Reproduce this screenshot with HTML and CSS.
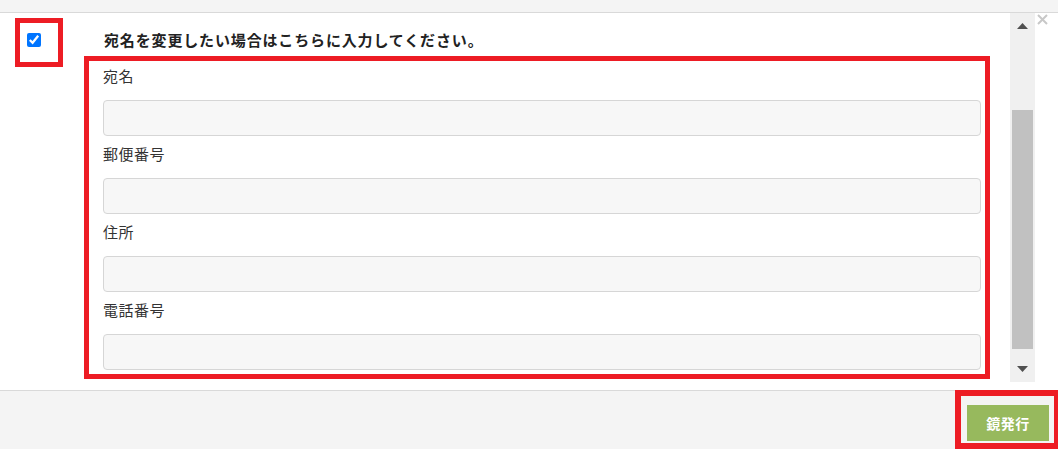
FILE: index.html
```html
<!DOCTYPE html>
<html lang="ja">
<head>
<meta charset="utf-8">
<link rel="stylesheet" href="styles.css">
</head>
<body>
<div class="topbar"></div>
<div class="modal-body">
  <div class="check-col">
    <div class="check-box"><input type="checkbox" class="check" checked></div>
  </div>
  <div class="main">
    <div class="heading">宛名を変更したい場合はこちらに入力してください。</div>
    <div class="fields">
      <div class="group"><div class="label">宛名</div><div class="input"></div></div>
      <div class="group"><div class="label">郵便番号</div><div class="input"></div></div>
      <div class="group"><div class="label">住所</div><div class="input"></div></div>
      <div class="group"><div class="label">電話番号</div><div class="input"></div></div>
    </div>
  </div>
  <div class="scrollbar">
    <div class="sb-btn"><svg width="11" height="6" viewBox="0 0 11 6"><polygon points="5.5,0 11,6 0,6" fill="#505050"/></svg></div>
    <div class="sb-thumb"></div>
    <div class="sb-btn sb-down"><svg width="11" height="6" viewBox="0 0 11 6"><polygon points="0,0 11,0 5.5,6" fill="#505050"/></svg></div>
  </div>
  <div class="close"><svg width="11" height="11" viewBox="0 0 11 11"><path d="M1 1L10 10M10 1L1 10" stroke="#c8c8c8" stroke-width="2"/></svg></div>
</div>
<div class="footer">
  <div class="btn-box"><div class="btn">鏡発行</div></div>
</div>
</body>
</html>
```
FILE: styles.css
```css
* { box-sizing: border-box; }
html, body { margin: 0; padding: 0; }
body {
  width: 1058px;
  height: 449px;
  overflow: hidden;
  background: #fff;
  font-family: "Noto Sans CJK JP", "Noto Sans", sans-serif;
  color: #333;
}
.topbar {
  height: 13px;
  background: #f4f4f4;
  border-bottom: 1px solid #d9d9d9;
}
.modal-body {
  display: flex;
  height: 377px;
}
.check-col {
  width: 84px;
  padding: 5px 0 0 15px;
}
.check-box {
  width: 48px;
  height: 49px;
  border: 5px solid #ed1c24;
  padding: 10px 0 0 7px;
}
.check {
  display: block;
  margin: 0;
  width: 14px;
  height: 14px;
  accent-color: #0075ff;
}
.main {
  width: 906px;
  padding-top: 17px;
}
.heading {
  margin-left: 20px;
  font-size: 15px;
  letter-spacing: 0.85px;
  font-weight: bold;
  line-height: 20px;
  color: #222;
  margin-bottom: 6px;
}
.fields {
  border: 5px solid #ed1c24;
  padding: 3px 4px 4px 14px;
}
.group { margin-bottom: 6px; }
.group:last-child { margin-bottom: 0; }
.label {
  font-size: 15px;
  letter-spacing: 0.5px;
  line-height: 24px;
  margin-bottom: 12px;
  color: #333;
}
.input {
  height: 36px;
  background: #f7f7f7;
  border: 1px solid #d6d6d6;
  border-radius: 4px;
}
.scrollbar {
  width: 25px;
  height: 369px;
  margin-left: 20px;
  background: #f0f0f0;
  display: flex;
  flex-direction: column;
  align-items: center;
}
.sb-btn {
  height: 26px;
  width: 25px;
  display: flex;
  align-items: center;
  justify-content: center;
}
.sb-btn svg { display: block; }
.sb-thumb {
  width: 21px;
  height: 239px;
  margin-top: 71px;
  background: #c1c1c1;
}
.sb-down { margin-top: 7px; }
.close {
  margin: 1px 0 0 2px;
  width: 11px;
  height: 11px;
}
.close svg { display: block; }
.footer {
  height: 59px;
  background: #f4f4f4;
  border-top: 1px solid #d9d9d9;
  display: flex;
  justify-content: flex-end;
}
.btn-box {
  margin-top: -1px;
  margin-right: -2px;
  width: 105px;
  height: 59px;
  border: 6px solid #ed1c24;
  padding: 9px 0 0 6px;
}
.btn {
  width: 82px;
  height: 36px;
  background: #97b95d;
  color: #fff;
  font-size: 14px;
  font-weight: bold;
  display: flex;
  align-items: center;
  justify-content: center;
  letter-spacing: 0.5px;
}
```
